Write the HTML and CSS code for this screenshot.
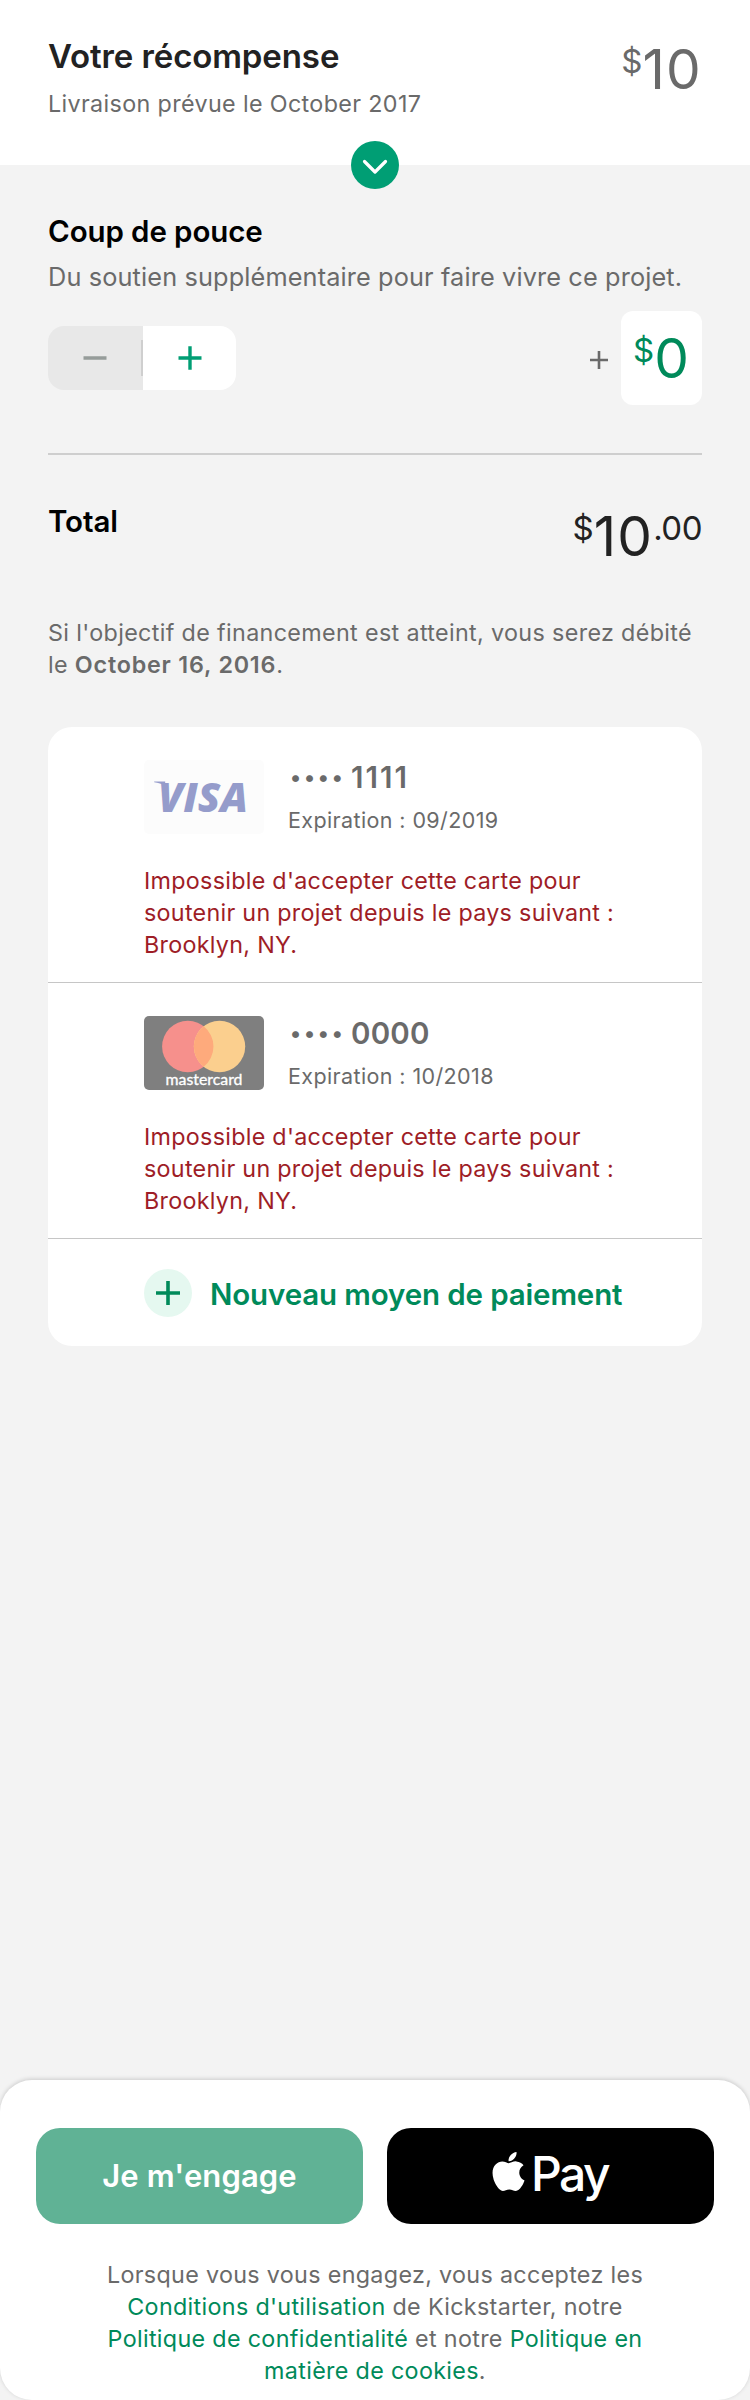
FILE: index.html
```html
<!DOCTYPE html>
<html lang="fr">
<head>
<meta charset="utf-8">
<title>Votre récompense</title>
<link rel="stylesheet" href="styles.css">
</head>
<body>
<div class="page">
  <header class="reward">
    <div>
      <h1 class="reward-title">Votre récompense</h1>
      <p class="reward-delivery">Livraison prévue le October 2017</p>
    </div>
    <div class="price price-muted"><span class="price-small">$</span><span class="price-big">10</span></div>
    <button class="expand" aria-label="Afficher">
      <svg width="48" height="48" viewBox="0 0 48 48"><path d="M13.5 20.5 24 31 34.5 20.5" fill="none" stroke="#fff" stroke-width="3.2" stroke-linecap="round" stroke-linejoin="round"/></svg>
    </button>
  </header>

  <main class="content">
    <h2 class="heading">Coup de pouce</h2>
    <p class="bonus-text">Du soutien supplémentaire pour faire vivre ce projet.</p>
    <div class="bonus-row">
      <div class="stepper">
        <button class="step step-off" aria-label="Moins"><svg width="24" height="24" viewBox="0 0 24 24"><path d="M.5 12h23" stroke="#969c9a" stroke-width="3.6"/></svg></button>
        <button class="step" aria-label="Plus"><svg width="24" height="24" viewBox="0 0 24 24"><path d="M.5 12h23M12 .3v23.4" stroke="#009e74" stroke-width="3.4"/></svg></button>
      </div>
      <div class="bonus-amount">
        <svg width="18" height="18" viewBox="0 0 18 18"><path d="M0 9h18M9 0v18" stroke="#6a6a6a" stroke-width="2.6"/></svg>
        <div class="amount-box"><div class="price price-green"><span class="price-small">$</span><span class="price-big">0</span></div></div>
      </div>
    </div>

    <div class="total">
      <h2 class="heading">Total</h2>
      <div class="price"><span class="price-small">$</span><span class="price-big">10</span><span class="price-small price-cents">.00</span></div>
    </div>
    <p class="notice">Si l'objectif de financement est atteint, vous serez débité<br>le <strong>October 16, 2016</strong>.</p>

    <section class="cards">
      <article class="card">
        <div class="card-top">
          <svg class="card-logo" width="120" height="74" viewBox="0 0 120 74">
            <rect width="120" height="74" rx="5" fill="#fcfcfc"/>
            <path d="M10.2 21.5h11v4.500C18 24 14 22.8 10.2 22.300z" fill="#959ccb"/>
            <text class="visa" x="14" y="51.500" textLength="90" lengthAdjust="spacingAndGlyphs">VISA</text>
          </svg>
          <div class="card-info">
            <div class="card-number"><span class="dots">••••</span><span class="digits-one">1111</span></div>
            <div class="card-expiry">Expiration : 09/2019</div>
          </div>
        </div>
        <p class="card-error">Impossible d'accepter cette carte pour<br>soutenir un projet depuis le pays suivant :<br>Brooklyn, NY.</p>
      </article>
      <article class="card">
        <div class="card-top">
          <svg class="card-logo" width="120" height="74" viewBox="0 0 120 74">
            <rect width="120" height="74" rx="5" fill="#7f7f7f"/>
            <circle cx="43.800" cy="30.500" r="25.700" fill="#f6908c"/>
            <circle cx="75.500" cy="30.500" r="25.700" fill="#fbcf8e"/>
            <path d="M59.650 10.300a25.700 25.700 0 0 1 0 40.400a25.700 25.700 0 0 1 0-40.400z" fill="#feaa7c"/>
            <text class="mastercard" x="21.500" y="69.300" textLength="77" lengthAdjust="spacingAndGlyphs">mastercard</text>
          </svg>
          <div class="card-info">
            <div class="card-number"><span class="dots">••••</span><span>0000</span></div>
            <div class="card-expiry">Expiration : 10/2018</div>
          </div>
        </div>
        <p class="card-error">Impossible d'accepter cette carte pour<br>soutenir un projet depuis le pays suivant :<br>Brooklyn, NY.</p>
      </article>
      <div class="new-card">
        <svg width="48" height="48" viewBox="0 0 48 48"><circle cx="24" cy="24" r="24" fill="#e5f8f0"/><path d="M12 24h24M24 12v24" stroke="#008a5a" stroke-width="3.600"/></svg>
        <span class="new-card-label">Nouveau moyen de paiement</span>
      </div>
    </section>
  </main>

  <footer class="footer">
    <div class="actions">
      <button class="btn btn-pledge">Je m'engage</button>
      <button class="btn btn-pay" aria-label="Apple Pay">
        <svg width="132" height="64" viewBox="0 0 132 64">
          <path transform="translate(7.200 5.300) scale(.0850 .0868)" fill="#fff" d="M318.700 268.700c-.2-36.700 16.400-64.400 50-84.800-18.800-26.900-47.200-41.700-84.700-44.600-35.500-2.800-74.300 20.700-88.500 20.700-15 0-49.400-19.700-76.400-19.700C63.300 141.200 4 184.800 4 273.500q0 39.300 14.400 81.200c12.800 36.700 59 126.700 107.200 125.200 25.200-.6 43-17.900 75.800-17.900 31.800 0 48.300 17.900 76.400 17.900 48.600-.7 90.400-82.500 102.600-119.300-65.200-30.700-61.700-90-61.700-91.900zm-56.600-164.200c27.300-32.400 24.800-61.900 24-72.500-24.100 1.400-52 16.400-67.900 34.900-17.500 19.800-27.800 44.300-25.600 71.900 26.100 2 49.900-11.400 69.500-34.300z"/>
          <text class="pay" x="46" y="46.500">Pay</text>
        </svg>
      </button>
    </div>
    <p class="legal">Lorsque vous vous engagez, vous acceptez les<br><a>Conditions d'utilisation</a> de Kickstarter, notre<br><a>Politique de confidentialité</a> et notre <a>Politique en</a><br><a>matière de cookies</a>.</p>
  </footer>
</div>
</body>
</html>
```
FILE: styles.css
```css
* { box-sizing: border-box; margin: 0; padding: 0; }

body {
  background: #f3f3f3;
  font-family: Inter, "Liberation Sans", sans-serif;
  color: #222;
}

svg { display: block; flex: none; }
button { border: 0; font: inherit; }

.page {
  display: flex;
  flex-direction: column;
  width: 750px;
  height: 2400px;
}

/* Reward header */
.reward {
  position: relative;
  display: flex;
  justify-content: space-between;
  height: 165px;
  padding: 36px 48px 0;
  background: #fff;
}
.reward-title {
  font-size: 33px;
  font-weight: 600;
  line-height: 40px;
  letter-spacing: -0.1px;
  color: #222;
}
.reward-delivery {
  margin-top: 14px;
  font-size: 23.3px;
  line-height: 28px;
  letter-spacing: 0.36px;
  color: #6a6a6a;
}
.expand {
  position: absolute;
  left: 351px;
  bottom: -24px;
  width: 48px;
  height: 48px;
  border-radius: 50%;
  background: #009e74;
}

/* Prices */
.price {
  display: flex;
  align-items: flex-start;
  margin-top: 5px;
  color: #222;
}
.price-big { font-size: 55px; line-height: 56px; letter-spacing: 1.2px; }
.price-small { font-size: 33px; line-height: 41px; }
.price-cents { letter-spacing: -0.5px; }
.price-muted { color: #6a6a6a; }
.price-green { margin-top: 0; color: #008a5a; }

/* Bonus support */
.content { padding: 48px 48px 0; }
.heading {
  font-size: 29.5px;
  font-weight: 600;
  line-height: 36px;
  letter-spacing: -0.1px;
  color: #000;
}
.bonus-text {
  margin-top: 12px;
  font-size: 25.3px;
  line-height: 32px;
  letter-spacing: 0.13px;
  color: #6a6a6a;
}
.bonus-row {
  display: flex;
  justify-content: space-between;
  margin-top: 18px;
  padding-bottom: 48px;
  border-bottom: 2px solid #cecece;
}
.stepper {
  display: flex;
  width: 188px;
  height: 64px;
  margin-top: 15px;
  border-radius: 16px;
  overflow: hidden;
}
.step {
  display: flex;
  align-items: center;
  justify-content: center;
  width: 93px;
  background: #fff;
}
.step-off {
  width: 95px;
  padding-right: 2px;
  background: linear-gradient(#cfcfcf, #cfcfcf) right center / 2px 36px no-repeat #e8e8e8;
}
.bonus-amount { display: flex; align-items: center; gap: 13px; }
.bonus-amount > svg { margin-top: 4px; }
.amount-box {
  display: flex;
  justify-content: center;
  width: 81px;
  height: 94px;
  padding-top: 19px;
  border-radius: 12px;
  background: #fff;
}

/* Total */
.total {
  display: flex;
  justify-content: space-between;
  margin-top: 48px;
}
.notice {
  margin-top: 53px;
  font-size: 23.3px;
  line-height: 32px;
  letter-spacing: 0.354px;
  color: #6a6a6a;
}
.notice strong { font-weight: 600; letter-spacing: 0.8px; }

/* Payment methods */
.cards {
  margin-top: 46px;
  border-radius: 24px;
  background: #fff;
}
.card {
  padding: 33px 0 21px 96px;
  border-bottom: 1px solid #c6c6c6;
}
.card-top { display: flex; gap: 24px; height: 74px; }
.card-info { margin-top: -1px; color: #6a6a6a; }
.card-number {
  display: flex;
  padding-left: 2px;
  font-size: 29.5px;
  font-weight: 600;
  line-height: 36px;
  letter-spacing: 0.2px;
}
.dots { width: 61px; font-size: 22px; letter-spacing: 2.8px; }
.digits-one { letter-spacing: 2px; }
.card-expiry {
  margin-top: 11px;
  font-size: 21.5px;
  line-height: 28px;
  letter-spacing: 0.39px;
}
.card-error {
  margin-top: 31px;
  font-size: 23.3px;
  line-height: 32px;
  letter-spacing: 0.29px;
  color: #9e1d26;
}
.visa { font: italic 800 41.5px "Open Sans", sans-serif; fill: #959ccb; }
.mastercard { font: 400 15px Lato, sans-serif; fill: #fff; stroke: #fff; stroke-width: 0.3px; }
.new-card {
  display: flex;
  align-items: center;
  gap: 18px;
  padding: 30px 0 29px 96px;
}
.new-card-label {
  padding-top: 2px;
  font-size: 29.5px;
  font-weight: 600;
  line-height: 36px;
  letter-spacing: -0.13px;
  color: #008a5a;
}

/* Footer */
.footer {
  height: 320px;
  margin-top: auto;
  padding: 48px 36px 0;
  border-radius: 32px;
  background: #fff;
  box-shadow: 0 -1px 4px rgba(0, 0, 0, 0.17);
}
.actions { display: flex; gap: 24px; }
.btn {
  display: flex;
  align-items: center;
  justify-content: center;
  width: 327px;
  height: 96px;
  border-radius: 24px;
}
.btn-pledge {
  padding-bottom: 2px;
  font-size: 31px;
  font-weight: 600;
  letter-spacing: 0.1px;
  color: #fff;
  background: #60b295;
}
.btn-pay { background: #000; }
.pay { font: 500 48px Inter, sans-serif; letter-spacing: -2.5px; fill: #fff; }
.legal {
  margin-top: 35px;
  font-size: 23.3px;
  line-height: 32px;
  letter-spacing: 0.33px;
  text-align: center;
  color: #6a6a6a;
}
.legal a { color: #008a5a; }
```
